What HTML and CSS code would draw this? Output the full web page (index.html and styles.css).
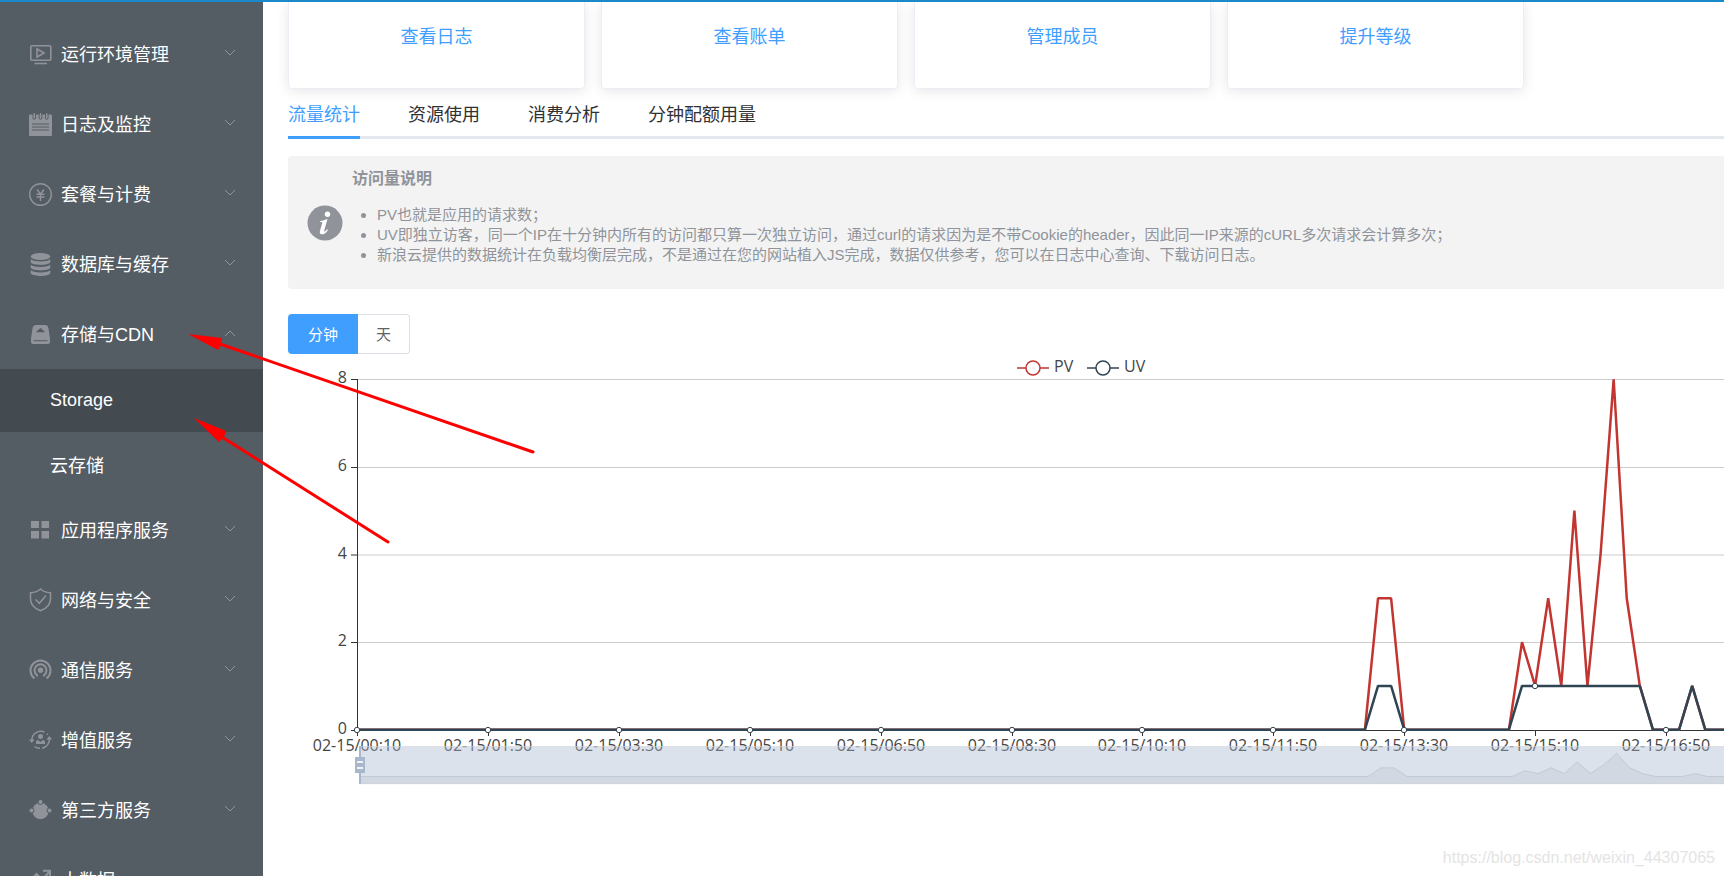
FILE: index.html
```html
<!DOCTYPE html>
<html lang="zh-CN">
<head>
<meta charset="utf-8">
<title>应用总览</title>
<link rel="stylesheet" href="styles.css">
</head>
<body>
<svg class="defs" aria-hidden="true">
  <symbol id="chevron" viewBox="0 0 12 8"><path d="M1 1l5 5 5-5" fill="none" stroke="#909399" stroke-width="1"/></symbol>
</svg>
<div class="layout">
  <nav class="sidebar">
    <ul class="menu">
      <li><a class="menu-item" href="#">
        <svg class="icon" viewBox="0 0 24 24"><g fill="none" stroke="currentColor" stroke-width="1.6"><rect x="1.8" y="3.8" width="20" height="14.4" rx="1"/><path d="M8 7v8l7-4z"/><path d="M5.500 21.500h12.500"/></g></svg>
        <span>运行环境管理</span><svg class="chevron"><use href="#chevron"/></svg></a></li>
      <li><a class="menu-item" href="#">
        <svg class="icon" viewBox="0 0 24 24"><rect x="0" y="2.500" width="23" height="21.500" rx="1" fill="currentColor"/><g class="cut"><path d="M4 1.500v4.500a1.300 1.300 0 0 0 2.600 0V1.500M10.200 1.500v4.500a1.300 1.300 0 0 0 2.600 0V1.500M16.400 1.500v4.500a1.300 1.300 0 0 0 2.600 0V1.500"/><path d="M3 12h17M3 15h17M3 18h17"/></g><path d="M5.300 1v4.500M11.500 1v4.500M17.700 1v4.500" stroke="currentColor" stroke-width="1.2"/></svg>
        <span>日志及监控</span><svg class="chevron"><use href="#chevron"/></svg></a></li>
      <li><a class="menu-item" href="#">
        <svg class="icon" viewBox="0 0 24 24"><g fill="none" stroke="currentColor" stroke-width="1.4"><circle cx="11.500" cy="12.500" r="10.800"/><path d="M8 7.500l3.500 4.500 3.500-4.500M11.500 12v7M7.500 12.300h8M7.500 15h8"/></g></svg>
        <span>套餐与计费</span><svg class="chevron"><use href="#chevron"/></svg></a></li>
      <li><a class="menu-item" href="#">
        <svg class="icon" viewBox="0 0 24 24"><g fill="currentColor"><ellipse cx="11.500" cy="4.500" rx="9.800" ry="3.600"/><path d="M1.700 7.200c4 3 15.600 3 19.600 0v3.300c-2.500 3.200-17.100 3.200-19.600 0zM1.700 12.700c4 3 15.600 3 19.600 0V16c-2.500 3.200-17.100 3.200-19.600 0zM1.700 18.200c4 3 15.600 3 19.600 0v3c-2.500 3.700-17.100 3.700-19.600 0z"/></g></svg>
        <span>数据库与缓存</span><svg class="chevron"><use href="#chevron"/></svg></a></li>
      <li><a class="menu-item" href="#" aria-expanded="true">
        <svg class="icon" viewBox="0 0 24 24"><path d="M7 3h9c2 0 3 1 3.400 3L21 16.500V20q0 2-2 2H4q-2 0-2-2v-3.500L3.600 6C4 4 5 3 7 3z" fill="currentColor"/><path d="M11.500 6L15.500 9.200v1H7.500v-1z" class="hole"/><path d="M4.500 18.700h14" class="cut"/></svg>
        <span>存储与CDN</span><svg class="chevron up"><use href="#chevron"/></svg></a>
        <ul class="submenu">
          <li><a class="sub-item active" href="#">Storage</a></li>
          <li><a class="sub-item" href="#">云存储</a></li>
        </ul>
      </li>
      <li><a class="menu-item" href="#">
        <svg class="icon" viewBox="0 0 24 24"><path d="M2 3h8v7H2zM12.500 3h7.500v7h-7.500zM2 13h8v7.500H2zM12.500 13h7.500v7.500h-7.500z" fill="currentColor"/></svg>
        <span>应用程序服务</span><svg class="chevron"><use href="#chevron"/></svg></a></li>
      <li><a class="menu-item" href="#">
        <svg class="icon" viewBox="0 0 24 24"><g fill="none" stroke="currentColor" stroke-width="1.5"><path d="M11.500 1C9 3.500 5.500 4.500 1.500 4.700V11c0 5.500 4 9.500 10 11.800 6-2.300 10-6.300 10-11.800V4.700C17.500 4.500 14 3.500 11.500 1z"/><path d="M6.500 11.500l3.800 3.800L17 7.500"/></g></svg>
        <span>网络与安全</span><svg class="chevron"><use href="#chevron"/></svg></a></li>
      <li><a class="menu-item" href="#">
        <svg class="icon" viewBox="0 0 24 24"><g fill="none" stroke="currentColor" stroke-width="2"><path d="M5.500 20.500a10 10 0 1 1 12 0"/><path d="M8 18.500v-1.300a6 6 0 1 1 7 0v1.300"/></g><circle cx="11.500" cy="12.300" r="2.700" fill="currentColor"/></svg>
        <span>通信服务</span><svg class="chevron"><use href="#chevron"/></svg></a></li>
      <li><a class="menu-item" href="#">
        <svg class="icon" viewBox="0 0 24 24"><g fill="none" stroke="currentColor" stroke-width="1.500"><path d="M2.800 12.500C2.800 6 9 1.500 15.500 4M5.500 18.500c1.500 1.200 3 1.800 5.500 1.800M20.300 10c.6 5-2.300 9.300-7.300 10.200M18 5.800l1 1"/></g><g fill="currentColor"><path d="M0 11.500h5.600L2.800 15zM17.300 11.500h6L20.300 8z"/><circle cx="11.500" cy="8.500" r="2.500"/><path d="M7 16v-2q0-2 2-2l2.500 2 2.500-2q2 0 2 2v2z"/></g></svg>
        <span>增值服务</span><svg class="chevron"><use href="#chevron"/></svg></a></li>
      <li><a class="menu-item" href="#">
        <svg class="icon" viewBox="0 0 24 24"><circle cx="11.500" cy="13" r="8.200" fill="currentColor"/><g class="ring"><circle cx="11.500" cy="4" r="2.500"/><circle cx="2.500" cy="12.500" r="2.500"/><circle cx="20.500" cy="12.500" r="2.500"/></g></svg>
        <span>第三方服务</span><svg class="chevron"><use href="#chevron"/></svg></a></li>
      <li><a class="menu-item" href="#">
        <svg class="icon" viewBox="0 0 24 24"><path d="M2 12l5.500-6 6 6L20 4M14 2.800h7V9" fill="none" stroke="currentColor" stroke-width="2"/></svg>
        <span>大数据</span><svg class="chevron"><use href="#chevron"/></svg></a></li>
    </ul>
  </nav>

  <main class="content">
    <div class="cards">
      <a class="card" href="#">查看日志</a>
      <a class="card" href="#">查看账单</a>
      <a class="card" href="#">管理成员</a>
      <a class="card" href="#">提升等级</a>
    </div>

    <div class="tabs" role="tablist">
      <button class="tab selected" role="tab" aria-selected="true">流量统计</button>
      <button class="tab" role="tab">资源使用</button>
      <button class="tab" role="tab">消费分析</button>
      <button class="tab" role="tab">分钟配额用量</button>
    </div>

    <section class="notice">
      <svg class="info" viewBox="0 0 36 36" aria-hidden="true"><circle cx="18" cy="18" r="17.500" fill="#909399"/><circle cx="20.500" cy="9.300" r="2.700" fill="#fff"/><path d="M13 16.200c3-.5 4.800-1.400 7.500-2.200l-3.300 11.500c-.4 1.700.7 1.500 2.800-1.300l1 .7c-2.500 3.800-4.700 4.600-6.400 4.400-1.900-.3-2.100-1.900-1.600-3.600l2.200-7.700c.3-1.100-.6-1.100-2.200-1z" fill="#fff"/></svg>
      <div>
        <h2 class="notice-title">访问量说明</h2>
        <ul class="notice-list">
          <li>PV也就是应用的请求数；</li>
          <li>UV即独立访客，同一个IP在十分钟内所有的访问都只算一次独立访问，通过curl的请求因为是不带Cookie的header，因此同一IP来源的cURL多次请求会计算多次；</li>
          <li>新浪云提供的数据统计在负载均衡层完成，不是通过在您的网站植入JS完成，数据仅供参考，您可以在日志中心查询、下载访问日志。</li>
        </ul>
      </div>
    </section>

    <div class="range">
      <button class="range-btn on">分钟</button><button class="range-btn">天</button>
    </div>

    <svg class="chart" role="img" aria-label="PV / UV">
      <g class="legend" stroke-width="1.500">
        <path d="M729 14h32" stroke="#c23531"/><circle cx="745" cy="14" r="7" stroke="#c23531"/>
        <path d="M799 14h32" stroke="#2f4554"/><circle cx="815" cy="14" r="7" stroke="#2f4554"/>
        <text x="766" y="18">PV</text><text x="836" y="18">UV</text>
      </g>
      <g class="grid">
        <path d="M69 25.500h1700M69 113.500h1700M69 201h1700M69 288.500h1700"/>
      </g>
      <g class="axis">
        <path d="M69.500 25v351M63 25.500h6M63 113.500h6M63 201h6M63 288.500h6M63 376.500h6M69 376.500h1700"/>
        <path d="M69.500 376v6M200.500 376v6M331.500 376v6M462.500 376v6M593.500 376v6M724.500 376v6M854.500 376v6M985.500 376v6M1116.500 376v6M1247.500 376v6M1378.500 376v6"/>
      </g>
      <g class="ylabels">
        <text x="59" y="29">8</text><text x="59" y="117">6</text><text x="59" y="205">4</text><text x="59" y="292">2</text><text x="59" y="380">0</text>
      </g>
      <g class="xlabels">
        <text x="69" y="397">02-15/00:10</text><text x="200" y="397">02-15/01:50</text><text x="331" y="397">02-15/03:30</text><text x="462" y="397">02-15/05:10</text><text x="593" y="397">02-15/06:50</text><text x="724" y="397">02-15/08:30</text><text x="854" y="397">02-15/10:10</text><text x="985" y="397">02-15/11:50</text><text x="1116" y="397">02-15/13:30</text><text x="1247" y="397">02-15/15:10</text><text x="1378" y="397">02-15/16:50</text>
      </g>
      <g class="series" stroke-width="2.500" transform="translate(69 375.700) scale(13.090 -43.800)">
        <polyline stroke="#c23531" points="0,0 77,0 78,3 79,3 80,0 88,0 89,2 90,1 91,3 92,1 93,5 94,1 95,4 96,8 97,3 98,1 99,0 101,0 102,1 103,0 143,0"/>
        <polyline stroke="#2f4554" points="0,0 77,0 78,1 79,1 80,0 88,0 89,1 98,1 99,0 101,0 102,1 103,0 143,0"/>
      </g>
      <g class="points">
        <circle cx="69" cy="376" r="2.700"/><circle cx="200" cy="376" r="2.700"/><circle cx="331" cy="376" r="2.700"/><circle cx="462" cy="376" r="2.700"/><circle cx="593" cy="376" r="2.700"/><circle cx="724" cy="376" r="2.700"/><circle cx="854" cy="376" r="2.700"/><circle cx="985" cy="376" r="2.700"/><circle cx="1116" cy="376" r="2.700"/><circle cx="1247" cy="332" r="2.700"/><circle cx="1378" cy="376" r="2.700"/>
      </g>
      <g class="zoom-bar">
        <rect x="72" y="392" width="1700" height="38" fill="#a7b7cc" fill-opacity=".4"/>
        <path transform="translate(72 422.500) scale(13.090 -2.900)" d="M0-2.500V0H77L78,3H79L80,0H88L89,2L90,1L91,3L92,1L93,5L94,1L95,4L96,8L97,3L98,1L99,0H101L102,1L103,0H143V-2.500z" fill="#2f4554" fill-opacity=".06" stroke="#2f4554" stroke-opacity=".12" vector-effect="non-scaling-stroke"/>
        <path d="M72 392.500h1700M72 429.500h1700" stroke="#ddd" stroke-opacity=".5"/>
        <path d="M72 392v38" stroke="#a7b7cc" stroke-width="2"/>
        <rect x="67" y="403" width="10" height="16" fill="#a7b7cc"/>
        <path d="M69 408h6M69 414h6" stroke="#f0f2f5" stroke-width="2"/>
      </g>
    </svg>
  </main>
</div>

<svg class="arrows" aria-hidden="true">
  <path d="M220 344L533 452M222 437L388 542" stroke="#f00" stroke-width="3" stroke-linecap="round"/>
  <path d="M188 334l34 4-1 7-3 5zM194 418l32 13-2 6-5 5z" fill="#f00"/>
</svg>
<div class="watermark">https://blog.csdn.net/weixin_44307065</div>
</body>
</html>
```
FILE: styles.css
```css
* { box-sizing: border-box; }

body {
  margin: 0;
  height: 100vh;
  overflow: hidden;
  border-top: 2px solid #1989ca;
  background: #fff;
  color: #303133;
  font-family: "Liberation Sans", "Noto Sans CJK SC", sans-serif;
  font-size: 18px;
}

a { color: inherit; text-decoration: none; }
ul { list-style: none; margin: 0; padding: 0; }
button { font: inherit; cursor: pointer; }
.defs { position: absolute; width: 0; height: 0; }

.layout { display: flex; height: 100%; }

.sidebar {
  flex: 0 0 263px;
  overflow: hidden;
  padding-top: 17px;
  background: #545c64;
  color: #fff;
}
.menu-item {
  display: flex;
  align-items: center;
  gap: 8px;
  height: 70px;
  padding: 0 27px 0 29px;
}
.menu-item span { padding-bottom: 3px; }
.icon { flex: none; width: 24px; height: 24px; color: #909399; }
.icon .cut { fill: none; stroke: #545c64; stroke-width: 1; }
.icon .hole { fill: #545c64; }
.icon .ring { fill: #909399; stroke: #545c64; stroke-width: 1; }
.chevron { width: 12px; height: 8px; margin: 0 0 3px auto; }
.chevron.up { transform: rotate(180deg); }
.sub-item {
  display: flex;
  align-items: center;
  height: 63px;
  padding-left: 50px;
}
.sub-item.active { background: #434a50; }

.content {
  flex: 1;
  min-width: 0;
  overflow: hidden;
  padding-left: 25px;
}

.cards {
  display: grid;
  grid-template-columns: repeat(4, 1fr);
  gap: 16px;
  max-width: 1236px;
}
.card {
  height: 87px;
  padding-top: 21px;
  border: 1px solid #ebeef5;
  border-top: 0;
  border-radius: 0 0 4px 4px;
  box-shadow: 0 2px 13px rgba(0, 0, 0, .1);
  color: #409eff;
  text-align: center;
  line-height: 28px;
}

.tabs {
  display: flex;
  gap: 48px;
  height: 50px;
  border-bottom: 3px solid #e4e7ed;
}
.tab {
  height: 50px;
  padding: 0;
  border: 0;
  border-bottom: 3px solid transparent;
  background: none;
  color: #303133;
}
.tab.selected { color: #409eff; border-color: #409eff; }

.notice {
  display: flex;
  align-items: center;
  gap: 9px;
  margin-top: 17px;
  height: 133px;
  padding-left: 19px;
  border-radius: 4px 0 0 4px;
  background: #f3f3f4;
  color: #909399;
}
.info { width: 36px; height: 36px; flex: none; }
.notice-title { margin: 0 0 14px; font-size: 16px; line-height: 24px; }
.notice-list {
  list-style: disc;
  padding-left: 25px;
  margin-bottom: 14px;
  font-size: 15px;
  line-height: 20px;
  white-space: nowrap;
}

.range { display: flex; margin-top: 25px; }
.range-btn {
  height: 40px;
  padding: 0 18px 2px;
  border: 1px solid #dcdfe6;
  border-left: 0;
  border-radius: 0 4px 4px 0;
  background: #fff;
  color: #606266;
  font-size: 15px;
}
.range-btn.on {
  padding: 0 20px 2px;
  border: 0;
  border-radius: 4px 0 0 4px;
  background: #409eff;
  color: #fff;
}

.chart {
  display: block;
  width: 100%;
  height: 440px;
  font-family: "Open Sans", "Noto Sans", sans-serif;
  font-size: 16px;
}
.chart text { fill: #444; }
.legend path, .legend circle { fill: #fff; }
.grid path { fill: none; stroke: #ccc; stroke-width: 1; }
.axis path { fill: none; stroke: #333; stroke-width: 1; }
.ylabels { text-anchor: end; }
.xlabels { text-anchor: middle; }
.series polyline {
  fill: none;
  stroke-linejoin: bevel;
  vector-effect: non-scaling-stroke;
}
.points circle { fill: #fff; stroke: #2f4554; stroke-width: 1; }

.arrows {
  position: absolute;
  top: 0;
  left: 0;
  width: 600px;
  height: 600px;
  pointer-events: none;
}
.watermark {
  position: absolute;
  right: 9px;
  bottom: 7px;
  color: #e4e4e4;
  font-size: 16px;
  line-height: 22px;
}
```
